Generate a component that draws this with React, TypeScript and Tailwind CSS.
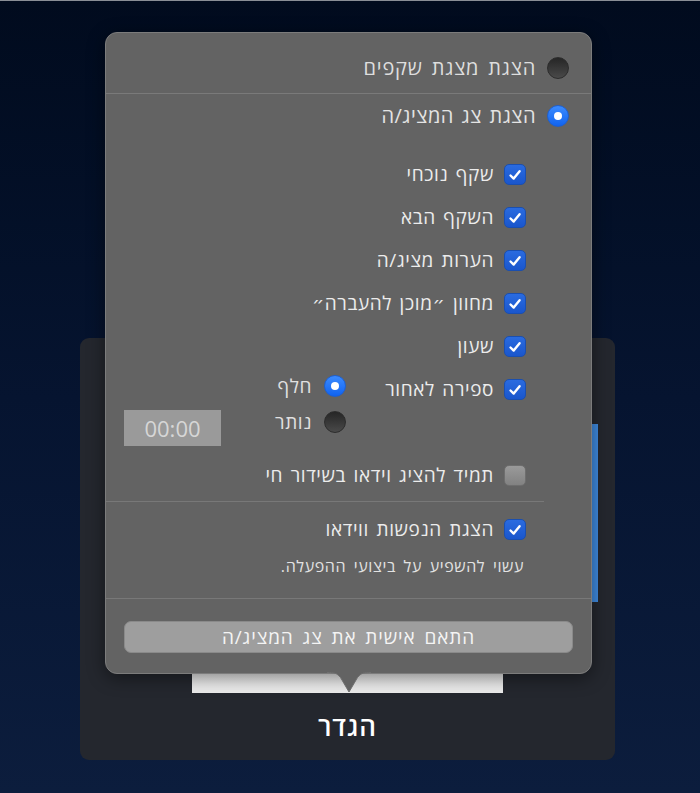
import React from "react";

// Presenter display popover over the "Set up" panel

const FONT = "font-['Open_Sans','DejaVu_Sans',sans-serif]";
const WIDE = "tracking-[0.6px] [word-spacing:2px]";

function Radio({ on }: { on: boolean }) {
  if (on) {
    return (
      <span className="flex h-[22px] w-[22px] shrink-0 items-center justify-center rounded-full border border-[#1d5fd0] bg-gradient-to-b from-[#3b8bff] to-[#0f63f0]">
        <span className="h-[8px] w-[8px] rounded-full bg-white" />
      </span>
    );
  }
  return (
    <span className="h-[22px] w-[22px] shrink-0 rounded-full border border-[#2c2c2c] bg-gradient-to-b from-[#262626] to-[#4a4a4a]" />
  );
}

function Checkbox({ on }: { on: boolean }) {
  if (!on) {
    return (
      <span className="h-[21px] w-[22px] shrink-0 rounded-[5px] border border-[#6e6e6e] bg-gradient-to-b from-[#9a9a9a] to-[#828282]" />
    );
  }
  return (
    <span className="flex h-[21px] w-[22px] shrink-0 items-center justify-center rounded-[5px] border border-[#1a4fb0] bg-gradient-to-b from-[#2a6be0] to-[#1a56cc]">
      <svg width="16" height="16" viewBox="0 0 16 16" fill="none">
        <path d="M3.5 8.5 L6.7 11.6 L12.6 4.2" stroke="white" strokeWidth="2.4" strokeLinecap="round" strokeLinejoin="round" />
      </svg>
    </span>
  );
}

function CheckRow({ on, label }: { on: boolean; label: string }) {
  return (
    <div className="flex h-[43px] items-center gap-[10px]">
      <Checkbox on={on} />
      <span className={`text-[19px] text-[#ececec] ${WIDE}`}>{label}</span>
    </div>
  );
}

const slideItems = [
  "שקף נוכחי",
  "השקף הבא",
  "הערות מציג/ה",
  "מחוון ״מוכן להעברה״",
  "שעון",
];

function Popover() {
  return (
    <div className="absolute left-[105px] top-[31px] w-[487px] rounded-[12px] border border-[#7c7c7c] bg-[#636363] shadow-[0_4px_18px_rgba(0,0,0,0.45)]">
      <div dir="rtl" className="flex flex-col">
        {/* mode choice */}
        <div className="flex h-[61px] items-center gap-[11px] border-b border-[#7a7a7a] pr-[22px] pt-[10px]">
          <Radio on={false} />
          <span className="text-[20px] tracking-[0.8px] text-[#dedede] [word-spacing:3px]">הצגת מצגת שקפים</span>
        </div>
        <div className="flex h-[44px] items-center gap-[11px] pr-[22px]">
          <Radio on={true} />
          <span className="text-[20px] tracking-[0.5px] text-[#e4e4e4] [word-spacing:2px]">הצגת צג המציג/ה</span>
        </div>

        {/* what the presenter display shows */}
        <div className="mt-[15px] flex flex-col pr-[65px]">
          {slideItems.map((label) => (
            <CheckRow key={label} on={true} label={label} />
          ))}
        </div>

        {/* countdown */}
        <div className="flex h-[86px] pl-[18px] pr-[65px]">
          <div className="flex h-[43px] w-[180px] items-center gap-[10px]">
            <Checkbox on={true} />
            <span className={`text-[19px] text-[#ececec] ${WIDE}`}>ספירה לאחור</span>
          </div>
          <div className="flex flex-1 flex-col">
            <div className="flex h-[36px] items-center gap-[12px]">
              <Radio on={true} />
              <span className={`text-[19px] text-[#e0e0e0] ${WIDE}`}>חלף</span>
            </div>
            <div className="flex h-[36px] items-center gap-[12px]">
              <Radio on={false} />
              <span className={`text-[19px] text-[#e0e0e0] ${WIDE}`}>נותר</span>
            </div>
          </div>
          <div className="mb-[8px] flex h-[36px] w-[97px] items-center justify-center self-end bg-[#9a9a9a] text-[22px] text-[#d6d6d6]">
            00:00
          </div>
        </div>

        <div className="pr-[65px]">
          <CheckRow on={false} label="תמיד להציג וידאו בשידור חי" />
        </div>

        <div className="ml-0 mr-[47px] mt-[4px] border-t border-[#787878]" />

        <div className="pr-[65px] pt-[6px]">
          <CheckRow on={true} label="הצגת הנפשות ווידאו" />
          <div className={`flex h-[30px] items-center pr-[2px] text-[16px] text-[#e2e2e2] tracking-[0.6px] [word-spacing:3px]`}>
            עשוי להשפיע על ביצועי ההפעלה.
          </div>
        </div>

        <div className="mt-[17px] border-t border-[#787878]" />

        <div className="px-[18px] pb-[20px] pt-[22px]">
          <div className="flex h-[32px] items-center justify-center rounded-[7px] border border-[#8a8a8a] bg-[#9e9e9e] text-[19px] tracking-[0.9px] text-[#f4f4f4] [word-spacing:3px]">
            התאם אישית את צג המציג/ה
          </div>
        </div>
      </div>

      {/* arrow pointing at the thumbnail */}
      <svg
        className="absolute left-1/2 top-full -ml-[22px] -mt-px"
        width="44"
        height="21"
        viewBox="0 0 44 21"
      >
        <path d="M0 0 C7 0 10 1 13.5 5.5 L22 20 L30.5 5.5 C34 1 37 0 44 0 Z" fill="#636363" />
        <path d="M0 0.5 C7 0.5 10 1 13.5 5.5 L22 20 L30.5 5.5 C34 1 37 0.5 44 0.5" fill="none" stroke="#6f6f6f" strokeWidth="1" />
      </svg>
    </div>
  );
}

export default function App() {
  return (
    <div
      className={`relative h-[793px] w-[700px] overflow-hidden border-t border-[#8a8e96] bg-gradient-to-b from-[#010b1e] via-[#061430] to-[#0c1d3d] ${FONT}`}
    >
      {/* set-up panel behind the popover */}
      <div className="relative ml-[80px] mt-[337px] flex h-[422px] w-[535px] flex-col items-center rounded-[9px] bg-[#24272e]">
        <div className="mt-[20px] h-[335px] w-[311px] bg-gradient-to-b from-[#f7f7f7] to-[#ececec]" />
        <div className="absolute right-[17px] top-[86px] h-[178px] w-[6px] bg-[#3f8be0]" />
        <div className="mt-[14px] text-[26px] font-semibold tracking-[1px] text-white" dir="rtl">
          הגדר
        </div>
      </div>

      <Popover />
    </div>
  );
}
